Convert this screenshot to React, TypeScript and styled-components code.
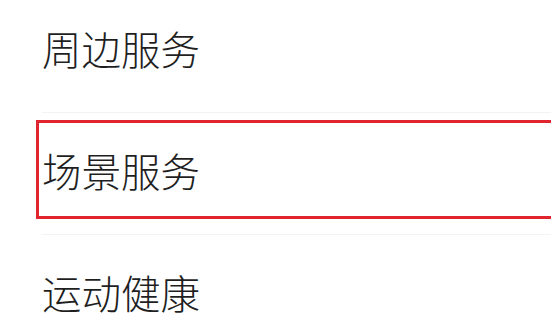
import React, { FC } from 'react';
import styled, { createGlobalStyle } from 'styled-components';

const GlobalStyle = createGlobalStyle`
  html, body {
    margin: 0;
    padding: 0;
    background: #ffffff;
    overflow: hidden;
  }
  body {
    font-family: "Noto Sans CJK SC", "Noto Sans", sans-serif;
  }
`;

const StyledList = styled.ul`
  list-style: none;
  margin: -9px 0 0 0;
  padding: 0;
  width: 100%;
`;

const StyledRow = styled.li`
  position: relative;
  display: flex;
  align-items: center;
  box-sizing: border-box;
  height: 122px;
  padding-bottom: 8px;
  margin-left: 42px;
  border-bottom: 1px solid #f3f3f3;
  font-size: 39.5px;
  font-weight: 300;
  color: #1f1f1f;
  line-height: 1;
`;

const StyledHighlight = styled.div`
  position: absolute;
  left: -6px;
  right: -10px;
  top: 7px;
  height: 99px;
  box-sizing: border-box;
  border: 3px solid #e1252f;
  pointer-events: none;
`;

type MenuItem = {
  label: string;
  selected?: boolean;
};

const items: MenuItem[] = [
  { label: '周边服务' },
  { label: '场景服务', selected: true },
  { label: '运动健康' },
];

const App: FC = () => (
  <React.Fragment>
    <GlobalStyle />
    <StyledList>
      {items.map((item) => (
        <StyledRow key={item.label}>
          {item.label}
          {item.selected && <StyledHighlight />}
        </StyledRow>
      ))}
    </StyledList>
  </React.Fragment>
);

export default App;
